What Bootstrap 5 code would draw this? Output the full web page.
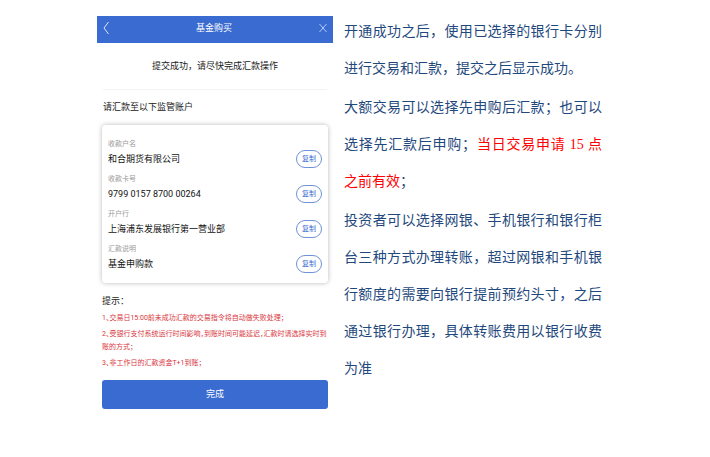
<!DOCTYPE html>
<html lang="zh-CN">
<head>
<meta charset="utf-8">
<meta name="viewport" content="width=device-width, initial-scale=1">
<title>基金购买</title>
<link href="https://cdn.jsdelivr.net/npm/bootstrap@5.3.0/dist/css/bootstrap.min.css" rel="stylesheet">
<style>
  body { font-family: Roboto, "Noto Sans CJK SC", sans-serif; color: #222; background: #fff; }
  .page { padding: 16px 108px 16px 97px; column-gap: 11px; }
  .phone { flex: 236 1 0; min-width: 0; font-size: 9px; line-height: 16px; }
  .guide { flex: 258 1 0; min-width: 0; margin-top: -3px; font-family: "Liberation Serif", "Noto Sans CJK SC", serif; font-size: 14px; line-height: 37px; color: #1f497d; text-align: justify; }
  .guide p { margin-bottom: 2px; }
  .guide em { font-style: normal; color: #f00; }
  .topbar { background: #3a6bd0; padding: 0 6px; height: 27px; }
  .topbar h1 { font-size: 9px; line-height: 16px; padding-bottom: 4px; }
  .topbar button { padding: 0 0 4px; line-height: 0; }
  .status { padding: 15px 0; border-bottom: 1px solid #f3f3f3; margin: 0 6px; }
  .panel { padding: 0 5px; }
  .panel h2, .panel h3 { font-size: 9px; line-height: 16px; }
  .panel h2 { margin: 9px 0 10px; padding-left: 1px; }
  .panel h3 { margin: 10px 0 0; }
  .account { border-radius: 4px; box-shadow: 0 0 5px rgba(0,0,0,.28); padding: 12px 6px 6px; }
  .entry { margin-bottom: 4px; }
  .entry label { font-size: 7px; line-height: 14px; color: #999; }
  .entry output { line-height: 17px; color: #111; }
  .copy { width: 26px; height: 18px; padding: 0; border: 1px solid #6f92d8; border-radius: 9px; font-size: 7px; line-height: 14px; color: #3a6bd0; }
  .tips { font-size: 7px; line-height: 13px; color: #d9363e; font-feature-settings: "halt"; }
  .tips li { margin-top: 3px; }
  .finish { margin-top: 10px; height: 29px; padding: 0; border: 0; border-radius: 3px; background: #3a6bd0; font-size: 9px; }
</style>
<script src="https://cdn.jsdelivr.net/npm/bootstrap@5.3.0/dist/js/bootstrap.bundle.min.js"></script>
</head>
<body>
<main class="page d-flex align-items-start">
  <section class="phone">
    <header class="topbar d-flex align-items-center justify-content-between text-white">
      <button type="button" class="btn border-0" aria-label="返回">
        <svg width="6" height="14" viewBox="0 0 6 14" fill="none" stroke="#dce6fa" stroke-width="1"><path d="M5.5 1 1 7l4.500 6"/></svg>
      </button>
      <h1 class="m-0 fw-normal">基金购买</h1>
      <button type="button" class="btn border-0" aria-label="关闭">
        <svg width="8" height="10" viewBox="0 0 8 10" fill="none" stroke="#b5c8f2" stroke-width="1"><path d="m.5 1 7 8m0-8-7 8"/></svg>
      </button>
    </header>
    <p class="status text-center">提交成功，请尽快完成汇款操作</p>
    <div class="panel">
      <h2 class="fw-normal">请汇款至以下监管账户</h2>
      <div class="account">
        <div class="entry d-flex align-items-end justify-content-between">
          <div class="d-flex flex-column"><label for="holder">收款户名</label><output id="holder">和合期货有限公司</output></div>
          <button type="button" class="btn copy">复制</button>
        </div>
        <div class="entry d-flex align-items-end justify-content-between">
          <div class="d-flex flex-column"><label for="number">收款卡号</label><output id="number">9799 0157 8700 00264</output></div>
          <button type="button" class="btn copy">复制</button>
        </div>
        <div class="entry d-flex align-items-end justify-content-between">
          <div class="d-flex flex-column"><label for="bank">开户行</label><output id="bank">上海浦东发展银行第一营业部</output></div>
          <button type="button" class="btn copy">复制</button>
        </div>
        <div class="entry d-flex align-items-end justify-content-between">
          <div class="d-flex flex-column"><label for="note">汇款说明</label><output id="note">基金申购款</output></div>
          <button type="button" class="btn copy">复制</button>
        </div>
      </div>
      <h3 class="fw-normal">提示：</h3>
      <ul class="tips list-unstyled m-0">
        <li>1、交易日15:00前未成功汇款的交易指令将自动做失败处理；</li>
        <li>2、受银行支付系统运行时间影响，到账时间可能延迟，汇款时请选择实时到账的方式；</li>
        <li>3、非工作日的汇款资金T+1到账；</li>
      </ul>
      <button type="button" class="btn btn-primary finish w-100">完成</button>
    </div>
  </section>
  <section class="guide">
    <p>开通成功之后，使用已选择的银行卡分别进行交易和汇款，提交之后显示成功。</p>
    <p>大额交易可以选择先申购后汇款；也可以选择先汇款后申购；<em>当日交易申请 15 点之前有效</em>；</p>
    <p>投资者可以选择网银、手机银行和银行柜台三种方式办理转账，超过网银和手机银行额度的需要向银行提前预约头寸，之后通过银行办理，具体转账费用以银行收费为准</p>
  </section>
</main>
</body>
</html>
